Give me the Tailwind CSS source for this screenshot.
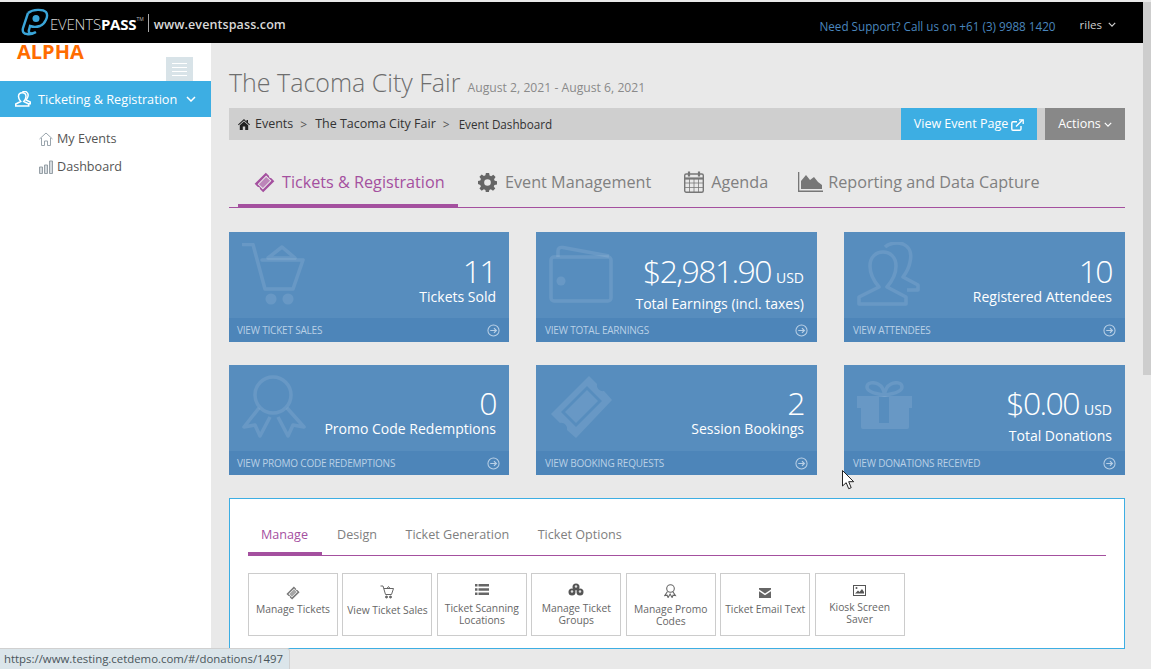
<!DOCTYPE html>
<html lang="en">
<head>
  <meta charset="UTF-8">
  <title>The Tacoma City Fair</title>
  <script src="https://cdn.jsdelivr.net/npm/@tailwindcss/browser@4"></script>
</head>
<body class="font-['Open_Sans',sans-serif] bg-[#e9e9e9] overflow-hidden">
  <svg class="hidden">
    <symbol id="ticket" viewBox="0 0 64 64">
      <path fill-rule="evenodd" d="M36 2l10 10c-1 4 2 7 6 6l10 10L28 62 18 52c1-4-2-7-6-6L2 36zM37 11L11 37l16 16 26-26z"/>
      <path d="M37 15l12 12-22 22-12-12z" opacity=".65"/>
    </symbol>
    <symbol id="arrow" viewBox="0 0 14 14">
      <circle cx="7" cy="7" r="6" fill="none" stroke="currentColor" stroke-width="1.1"/>
      <path d="M3.5 7h6.5M7.5 4.4L10.1 7 7.5 9.6" fill="none" stroke="currentColor" stroke-width="1.3"/>
    </symbol>
    <symbol id="chev" viewBox="0 0 10 6">
      <path d="M1 1l4 4 4-4" fill="none" stroke="currentColor" stroke-width="1.5"/>
    </symbol>
  </svg>

  <div class="relative w-[1151px] h-[669px] pt-[2px] flex flex-col">
    <!-- top bar -->
    <header class="w-[1143px] h-[41px] bg-black flex items-center shrink-0">
      <svg class="ml-[21px] w-[28px] h-[29px]" viewBox="0 0 28 29" fill="none" stroke="#3aa5d8">
        <path d="M7 5c5-4 15-4 18-1 3 4-1 12-6 14-3 1-7 1-10 0l-1 4c-1 3 2 4 4 3" stroke-width="2.4"/>
        <path d="M7 5L2 20c-1 4 1 6 4 6 4 1 7-1 9-2" stroke-width="2.4"/>
        <circle cx="15" cy="10.500" r="3.500" fill="#3aa5d8" stroke="none"/>
      </svg>
      <span class="ml-[1px] mt-[3px] text-[15px] tracking-[-0.2px] font-light text-[#d8d8d8] leading-none">EVENTS<b class="font-bold text-white">PASS</b></span>
      <span class="text-[5px] text-[#bbb] self-start mt-[14px]">TM</span>
      <span class="ml-[4px] mt-[1px] w-px h-[18px] bg-[#aaa]"></span>
      <span class="ml-[5px] mt-[5px] text-[12.500px] font-semibold tracking-[0.1px] text-[#d8d8d8]">www.eventspass.com</span>
      <span class="ml-auto mt-[9px] text-[11.700px] text-[#4a86bd]">Need Support? Call us on +61 (3) 9988 1420</span>
      <span class="ml-[24px] mt-[5px] text-[11.500px] text-[#cfcfcf]">riles</span>
      <svg class="ml-[6px] mr-[27px] mt-[3px] w-[8px] h-[5px] text-[#cfcfcf]"><use href="#chev"/></svg>
    </header>

    <div class="flex flex-1 min-h-0">
      <!-- sidebar -->
      <aside class="w-[211px] bg-white shrink-0">
        <div class="h-[38px] flex justify-between">
          <span class="pl-[17px] text-[20px] leading-[18px] font-bold text-[#ff6c00]">ALPHA</span>
          <button class="mt-[14px] mr-[18px] w-[27px] h-[24px] bg-[#d8e3e8] flex flex-col items-center justify-center gap-[3px]">
            <i class="block w-[15px] h-px bg-white"></i><i class="block w-[15px] h-px bg-white"></i><i class="block w-[15px] h-px bg-white"></i><i class="block w-[15px] h-px bg-white"></i>
          </button>
        </div>
        <div class="h-[36px] bg-[#3daee3] flex items-center text-white">
          <svg class="ml-[15px] w-[16px] h-[16px]" viewBox="0 0 64 64" fill="none" stroke="currentColor" stroke-width="6">
            <path d="M3 60v-8l20-10c-6-7-9-12-9-20 0-10 6-15 15-15s15 6 15 15c0 8-3 13-9 20l20 10v8z"/>
            <path d="M30 5c4-4 12-4 17 0 7 6 6 17 1 25l-4 6 17 8v7h-8"/>
          </svg>
          <span class="ml-[7px] mt-[1px] text-[12.700px]">Ticketing &amp; Registration</span>
          <svg class="ml-[9px] w-[10px] h-[6px]"><use href="#chev"/></svg>
        </div>
        <nav class="pt-[8px] text-[12.600px] text-[#555]">
          <a class="h-[28px] flex items-center pl-[39px] gap-[4px]">
            <svg class="w-[14px] h-[14px]" viewBox="0 0 14 14" fill="none" stroke="#9aa5ad" stroke-width="1"><path d="M.5 7L7 1l6.500 6M2.500 6v7.500h3V9h3v4.500h3V6"/></svg>
            My Events
          </a>
          <a class="h-[28px] flex items-center pl-[39px] gap-[4px]">
            <svg class="w-[14px] h-[14px]" viewBox="0 0 14 14" fill="#d5dade" stroke="#8d979e" stroke-width=".9"><path d="M.5 7h3v6.500h-3zM5.500 5h3v8.500h-3zM10.500 1h3v12.500h-3z"/></svg>
            Dashboard
          </a>
        </nav>
      </aside>

      <!-- main -->
      <main class="w-[932px] px-[18px]">
        <div class="pt-[21px] h-[65px] flex items-baseline gap-[7px] whitespace-nowrap">
          <h1 class="text-[25px] leading-[36px] font-light text-[#6e6e6e]">The Tacoma City Fair</h1>
          <span class="text-[12.200px] text-[#8a8a8a]">August 2, 2021 - August 6, 2021</span>
        </div>

        <div class="h-[32px] bg-[#cfcfcf] flex items-center">
          <svg class="ml-[9px] w-[12px] h-[11px] text-[#222]" viewBox="0 0 12 11" fill="currentColor"><path d="M6 0L0 5.500l.7.7L6 1.500l5.300 4.700.7-.7-2-1.800V1H8.500v1.600zM6 2.500L1.800 6.300V11h3V7.500h2.400V11h3V6.300z"/></svg>
          <span class="ml-[5px] mt-[1px] text-[12.500px] text-[#333]">Events</span>
          <span class="ml-[7px] mt-[1px] text-[12px] text-[#555]">&gt;</span>
          <span class="ml-[8px] mt-[1px] text-[12.500px] text-[#333]">The Tacoma City Fair</span>
          <span class="ml-[7px] mt-[1px] text-[12px] text-[#555]">&gt;</span>
          <span class="ml-[9px] mt-[1px] text-[11.700px] text-[#333]">Event Dashboard</span>
          <a class="ml-auto w-[136px] h-full pt-[1px] bg-[#3daee3] text-white text-[12.500px] flex items-center justify-center gap-[3px]">
            View Event Page
            <svg class="w-[13px] h-[12px]" viewBox="0 0 13 12" fill="none" stroke="currentColor" stroke-width="1.400"><path d="M10 7v3a1.300 1.300 0 0 1-1.300 1.300H2A1.300 1.300 0 0 1 .8 10V4A1.300 1.300 0 0 1 2 2.800h4"/><path d="M5 7.500L11.500 1"/><path d="M8 .8h4.200V5" stroke-width="1.300"/></svg>
          </a>
          <a class="ml-[8px] w-[80px] h-full pt-[1px] bg-[#888] text-white text-[12.500px] flex items-center justify-center gap-[3px]">
            Actions
            <svg class="w-[8px] h-[5px]"><use href="#chev"/></svg>
          </a>
        </div>

        <!-- main tabs -->
        <div class="mt-[20px] h-[48px] border-b border-[#a4509f] flex text-[16.200px] text-[#808080] whitespace-nowrap">
          <div class="ml-[9px] w-[220px] h-[47px] border-b-[3px] border-[#a4509f] flex items-center pl-[16px] gap-[7px] text-[#a4509f]">
            <svg class="w-[21px] h-[21px] text-[#a4509f]" fill="currentColor"><use href="#ticket"/></svg>
            Tickets &amp; Registration
          </div>
          <div class="ml-[20px] h-[47px] flex items-center pb-[3px] gap-[8px]">
            <svg class="w-[19px] h-[19px] text-[#666]" viewBox="0 0 20 20" fill="currentColor"><path fill-rule="evenodd" d="M8.300 0h3.400l.5 2.700 1.600.7 2.300-1.600 2.400 2.400-1.600 2.300.7 1.600 2.400.5v3.400l-2.700.5-.7 1.600 1.600 2.300-2.400 2.400-2.300-1.600-1.600.7-.5 2.700H8.300l-.5-2.700-1.600-.7-2.300 1.600-2.400-2.400 1.600-2.300-.7-1.600L0 11.700V8.300l2.400-.5.7-1.600-1.600-2.300 2.400-2.400 2.300 1.600 1.600-.7zM10 6.500a3.500 3.500 0 1 0 0 7 3.500 3.500 0 0 0 0-7z"/></svg>
            Event Management
          </div>
          <div class="ml-[33px] h-[47px] flex items-center pb-[3px] gap-[7px]">
            <svg class="w-[20px] h-[22px] text-[#777]" viewBox="0 0 20 22" fill="none" stroke="currentColor"><rect x=".7" y="3" width="18.600" height="18.300" rx="1.500" stroke-width="1.400"/><path d="M1 7.500h18" stroke-width="2.200"/><path d="M5 .5v5M15 .5v5" stroke-width="2.200"/><path d="M1 12h18M1 16.500h18M5.500 8v13M10 8v13M14.500 8v13" stroke-width=".8"/></svg>
            Agenda
          </div>
          <div class="ml-[30px] h-[47px] flex items-center pb-[3px] gap-[5px]">
            <svg class="w-[25px] h-[20px] text-[#777]" viewBox="0 0 25 20" fill="currentColor"><path d="M0 0h1.300v18.500H25V20H0z"/><path d="M3 17V9l5-6 4 5 4-3 4 5 4 3v4z"/></svg>
            Reporting and Data Capture
          </div>
        </div>

        <!-- stat cards -->
        <div class="mt-[24px] grid grid-cols-[280px_281px_281px] gap-x-[27px] gap-y-[23px] text-white">
          <div class="h-[110px] bg-[#578dbe] flex flex-col">
            <div class="flex-1 min-h-0 flex px-[13px]">
              <svg class="mt-[11px] w-[64px] h-[64px] text-white/10 shrink-0" viewBox="0 0 64 64" fill="none" stroke="currentColor" stroke-width="3.500" stroke-linejoin="round" stroke-linecap="round"><path d="M1 1.500h10l12 44.500h28l10-29H20"/><path d="M26 15L40 4l13 11z"/><circle cx="29" cy="56" r="5.500" fill="currentColor" stroke="none"/><circle cx="46" cy="56" r="5.500" fill="currentColor" stroke="none"/></svg>
              <div class="ml-auto text-right pt-[23px]">
                <div class="text-[32px] leading-[32px] font-light tracking-[-1.600px]">11</div>
                <div class="text-[14px] leading-[19px]">Tickets Sold</div>
              </div>
            </div>
            <div class="h-[24px] shrink-0 bg-[#4d85b9] flex items-center justify-between pl-[8px] pr-[9px] text-[10px] text-[#b9d0e6] tracking-[-0.2px]">VIEW TICKET SALES<svg class="w-[13px] h-[13px]"><use href="#arrow"/></svg></div>
          </div>

          <div class="h-[110px] bg-[#578dbe] flex flex-col">
            <div class="flex-1 min-h-0 flex px-[13px]">
              <svg class="mt-[13px] w-[64px] h-[58px] text-white/10 shrink-0" viewBox="0 0 64 58" fill="none" stroke="currentColor" stroke-width="3.500" stroke-linejoin="round"><rect x="2" y="12" width="60" height="44" rx="3"/><path d="M9 12V6c0-3 2-4 5-3.500L60 11"/><circle cx="12" cy="36" r="4.500" fill="currentColor" stroke="none"/></svg>
              <div class="ml-auto text-right pt-[23px]">
                <div class="text-[32px] leading-[32px] font-light tracking-[-1.600px]">$2,981.90<span class="ml-[5px] text-[14px] leading-none font-normal tracking-normal">USD</span></div>
                <div class="text-[14px] leading-[19px] mt-[7px]">Total Earnings (incl. taxes)</div>
              </div>
            </div>
            <div class="h-[24px] shrink-0 bg-[#4d85b9] flex items-center justify-between pl-[9px] pr-[9px] text-[10px] text-[#b9d0e6] tracking-[-0.2px]">VIEW TOTAL EARNINGS<svg class="w-[13px] h-[13px]"><use href="#arrow"/></svg></div>
          </div>

          <div class="h-[110px] bg-[#578dbe] flex flex-col">
            <div class="flex-1 min-h-0 flex px-[13px]">
              <svg class="mt-[10px] w-[64px] h-[64px] text-white/10 shrink-0" viewBox="0 0 64 64" fill="none" stroke="currentColor" stroke-width="3.500" stroke-linejoin="round"><path d="M2 62v-7l20-10c-6-7-9-13-9-21 0-9 6-14 13-14s13 5 13 14c0 8-3 14-9 21l19 10v7z"/><path d="M28 5c4-4 12-5 18-3 7 3 9 10 7 18-1 6-4 11-7 15l15 8v5h-11"/></svg>
              <div class="ml-auto text-right pt-[23px]">
                <div class="text-[32px] leading-[32px] font-light tracking-[-1.600px]">10</div>
                <div class="text-[14px] leading-[19px]">Registered Attendees</div>
              </div>
            </div>
            <div class="h-[24px] shrink-0 bg-[#4d85b9] flex items-center justify-between pl-[9px] pr-[9px] text-[10px] text-[#b9d0e6] tracking-[-0.2px]">VIEW ATTENDEES<svg class="w-[13px] h-[13px]"><use href="#arrow"/></svg></div>
          </div>

          <div class="h-[110px] bg-[#578dbe] flex flex-col">
            <div class="flex-1 min-h-0 flex px-[13px]">
              <svg class="mt-[10px] w-[64px] h-[64px] text-white/10 shrink-0" viewBox="0 0 64 64" fill="none" stroke="currentColor" stroke-width="3.500" stroke-linejoin="round"><circle cx="31" cy="20" r="18"/><path d="M17 33L2 52l11-2 5 11 10-19M45 33l17 19-11-2-5 11-10-19"/></svg>
              <div class="ml-auto text-right pt-[22px]">
                <div class="text-[32px] leading-[32px] font-light tracking-[-1.600px]">0</div>
                <div class="text-[14px] leading-[19px]">Promo Code Redemptions</div>
              </div>
            </div>
            <div class="h-[24px] shrink-0 bg-[#4d85b9] flex items-center justify-between pl-[8px] pr-[9px] text-[10px] text-[#b9d0e6] tracking-[-0.2px]">VIEW PROMO CODE REDEMPTIONS<svg class="w-[13px] h-[13px]"><use href="#arrow"/></svg></div>
          </div>

          <div class="h-[110px] bg-[#578dbe] flex flex-col">
            <div class="flex-1 min-h-0 flex px-[13px]">
              <svg class="mt-[10px] w-[64px] h-[64px] text-white/10 shrink-0" viewBox="0 0 64 64" fill="currentColor"><path fill-rule="evenodd" d="M40 1l8 8c-1 4 3 8 7 7l8 9-36 38-9-8c1-4-3-8-7-7l-9-9zM38 11L12 37l15 15 26-26z"/><path d="M38 15l11 11-22 22-11-11z"/></svg>
              <div class="ml-auto text-right pt-[22px]">
                <div class="text-[32px] leading-[32px] font-light tracking-[-1.600px]">2</div>
                <div class="text-[14px] leading-[19px]">Session Bookings</div>
              </div>
            </div>
            <div class="h-[24px] shrink-0 bg-[#4d85b9] flex items-center justify-between pl-[9px] pr-[9px] text-[10px] text-[#b9d0e6] tracking-[-0.2px]">VIEW BOOKING REQUESTS<svg class="w-[13px] h-[13px]"><use href="#arrow"/></svg></div>
          </div>

          <div class="h-[110px] bg-[#578dbe] flex flex-col">
            <div class="flex-1 min-h-0 flex px-[13px]">
              <svg class="mt-[16px] w-[55px] h-[48px] text-white/10 shrink-0" viewBox="0 0 55 48" fill="currentColor"><path fill-rule="evenodd" d="M0 15h55v12h-3v19a2 2 0 0 1-2 2H6a2 2 0 0 1-2-2V27H0zM22 16v26h10V16z"/><path d="M27.500 14C20 13 10 11 10 6c0-5 7-5 11-3 4 2 6 6 6.500 11zM27.500 14C35 13 45 11 45 6c0-5-7-5-11-3-4 2-6 6-6.500 11z" fill="none" stroke="currentColor" stroke-width="3.500"/></svg>
              <div class="ml-auto text-right pt-[22px]">
                <div class="text-[32px] leading-[32px] font-light tracking-[-1.600px]">$0.00<span class="ml-[5px] text-[14px] leading-none font-normal tracking-normal">USD</span></div>
                <div class="text-[14px] leading-[19px] mt-[7px]">Total Donations</div>
              </div>
            </div>
            <div class="h-[24px] shrink-0 bg-[#4d85b9] flex items-center justify-between pl-[9px] pr-[9px] text-[10px] text-[#b9d0e6] tracking-[-0.2px]">VIEW DONATIONS RECEIVED<svg class="w-[13px] h-[13px]"><use href="#arrow"/></svg></div>
          </div>
        </div>

        <!-- panel -->
        <section class="mt-[23px] h-[151px] bg-white border border-[#3daee3] px-[18px] pt-[20px]">
          <div class="h-[37px] border-b border-[#a4509f] flex text-[12.600px] text-[#808080]">
            <div class="w-[74px] h-[36px] border-b-[3px] border-[#a4509f] pl-[13px] pt-[7px] text-[#a4509f]">Manage</div>
            <div class="pl-[15px] pr-[14px] pt-[7px]">Design</div>
            <div class="px-[14.500px] pt-[7px]">Ticket Generation</div>
            <div class="px-[14px] pt-[7px]">Ticket Options</div>
          </div>
          <div class="mt-[17px] flex gap-[4.450px] text-[10.300px] leading-[12px] text-[#666] text-center">
            <a class="w-[90px] h-[63px] border border-[#ccc] flex flex-col items-center pt-[12px]">
              <svg class="w-[14px] h-[14px] text-[#777]" fill="currentColor"><use href="#ticket"/></svg>
              <span class="mt-[3px]">Manage Tickets</span>
            </a>
            <a class="w-[90px] h-[63px] border border-[#ccc] flex flex-col items-center pt-[11px]">
              <svg class="w-[14px] h-[14px] text-[#666]" viewBox="0 0 14 14" fill="none" stroke="currentColor"><path d="M.5 1h2.500l2.500 8.500h6l2-6H4M6.500 4L8.500 1.500 10.500 4"/><circle cx="6.500" cy="12" r="1" fill="currentColor"/><circle cx="10.500" cy="12" r="1" fill="currentColor"/></svg>
              <span class="mt-[5px]">View Ticket Sales</span>
            </a>
            <a class="w-[90px] h-[63px] border border-[#ccc] flex flex-col items-center pt-[10px]">
              <svg class="w-[14px] h-[11px] text-[#666]" viewBox="0 0 14 11" fill="currentColor"><path d="M0 0h2.500v2.500H0zM3.500 0H14v2.500H3.500zM0 4.200h2.500v2.500H0zM3.500 4.200H14v2.500H3.500zM0 8.400h2.500v2.500H0zM3.500 8.400H14v2.500H3.500z"/></svg>
              <span class="mt-[7px]">Ticket Scanning Locations</span>
            </a>
            <a class="w-[90px] h-[63px] border border-[#ccc] flex flex-col items-center pt-[9px]">
              <svg class="w-[16px] h-[13px] text-[#555]" viewBox="0 0 16 13"><g fill="currentColor"><circle cx="8" cy="4" r="3.500"/><circle cx="4" cy="9" r="3.500"/><circle cx="12" cy="9" r="3.500"/></g><g fill="#ddd"><circle cx="8" cy="3.500" r="1.200"/><circle cx="4" cy="8.500" r="1.200"/><circle cx="12" cy="8.500" r="1.200"/></g></svg>
              <span class="mt-[6px]">Manage Ticket Groups</span>
            </a>
            <a class="w-[90px] h-[63px] border border-[#ccc] flex flex-col items-center pt-[10px]">
              <svg class="w-[13px] h-[14px] text-[#666]" viewBox="0 0 13 14" fill="none" stroke="currentColor" stroke-width="1.100"><circle cx="6.500" cy="4.500" r="3.800"/><path d="M3.500 7.500L.8 11.500l2.300-.3 1 2.300 2-3.500 2 3.500 1-2.300 2.300.3-2.700-4"/></svg>
              <span class="mt-[5px]">Manage Promo Codes</span>
            </a>
            <a class="w-[90px] h-[63px] border border-[#ccc] flex flex-col items-center pt-[14px]">
              <svg class="w-[12px] h-[10px] text-[#666]" viewBox="0 0 12 10" fill="currentColor"><path d="M0 0h12v1.500L6 5.500 0 1.500zM0 3.200l6 4 6-4V10H0z"/></svg>
              <span class="mt-[5px]">Ticket Email Text</span>
            </a>
            <a class="w-[90px] h-[63px] border border-[#ccc] flex flex-col items-center pt-[11px]">
              <svg class="w-[13px] h-[11px] text-[#555]" viewBox="0 0 13 11"><rect x=".5" y=".5" width="12" height="10" fill="none" stroke="currentColor"/><path d="M2 8.500l3-3 1.500 1.500 2.500-3 2 3v1.500z" fill="currentColor"/><circle cx="3.500" cy="3" r="1" fill="currentColor"/></svg>
              <span class="mt-[5px]">Kiosk Screen Saver</span>
            </a>
          </div>
        </section>
      </main>

      <!-- scrollbar -->
      <div class="w-[8px] shrink-0 -mt-[41px]">
        <div class="h-[373px] bg-[#cdcdcd]"></div>
      </div>
    </div>

    <!-- browser status bubble -->
    <div class="absolute left-0 bottom-0 w-[290px] h-[21px] bg-[#dbe5ea] border-t border-r border-[#d0d0d0] rounded-tr-[3px] pl-[4px] text-[11.400px] leading-[20px] text-[#4a555b] whitespace-nowrap">https://www.testing.cetdemo.com/#/donations/1497</div>

    <!-- mouse pointer -->
    <svg class="absolute left-[842px] top-[470px] w-[13px] h-[20px]" viewBox="0 0 13 20"><path d="M.5.5v15.500l3.700-3.300 2.500 6 2.500-1-2.500-6h5z" fill="#fff" stroke="#222"/></svg>
  </div>
</body>
</html>
